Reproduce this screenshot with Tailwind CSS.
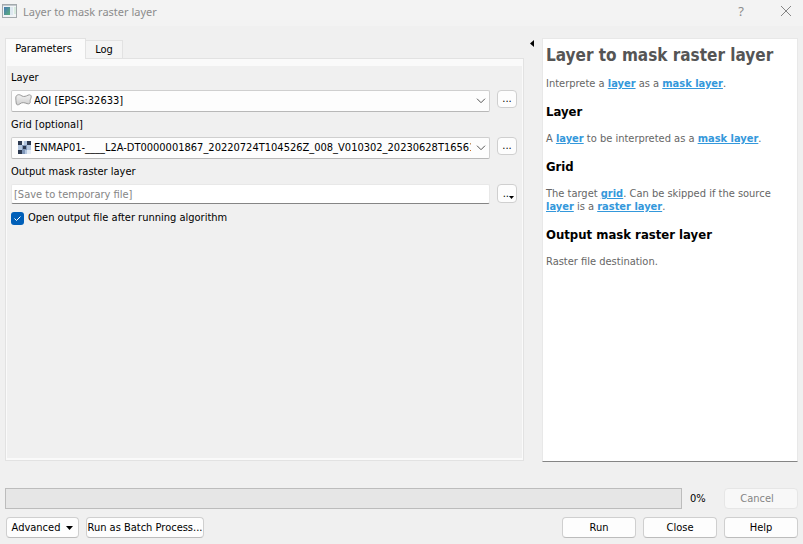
<!DOCTYPE html>
<html lang="en">
<head>
<meta charset="utf-8">
<title>Layer to mask raster layer</title>
<script src="https://cdn.jsdelivr.net/npm/@tailwindcss/browser@4"></script>
</head>
<body class="flex min-h-screen flex-col bg-[#f0f0f0] font-['DejaVu_Sans_Condensed','DejaVu_Sans',sans-serif] text-[11px] leading-4 text-black">
  <header class="flex h-[26px] items-center bg-[#f3f3f3] pl-[2px] pr-[11px] text-[#8c8c8c]">
    <svg class="mb-1 h-[14px] w-[15px]" viewBox="0 0 15 14" aria-hidden="true">
      <defs><linearGradient id="win" x1="0" y1="0" x2="1" y2="1"><stop offset="0" stop-color="#4678b4"/><stop offset="1" stop-color="#5cb07a"/></linearGradient></defs>
      <rect x=".5" y=".5" width="14" height="13" fill="#f1f4f6" stroke="#a3a9ad"/>
      <path d="M1 1.5h13" stroke="#c3c9cd"/>
      <rect x="2" y="3" width="6" height="8" fill="url(#win)"/>
      <rect x="8" y="3" width="3" height="8" fill="#dde8f0"/>
      <rect x="12" y="3" width="2" height="7" fill="#d7ebdf"/>
    </svg>
    <h1 class="ml-[6px] flex-1 pb-[2px] font-['Noto_Sans',sans-serif] text-[11px]">Layer to mask raster layer</h1>
    <button class="mr-[33px] w-3 pb-1 font-['Noto_Sans',sans-serif] text-[13px]" aria-label="What's this">?</button>
    <button class="pb-1" aria-label="Close window"><svg class="size-[12px]" viewBox="0 0 12 12" fill="none" stroke="#858585"><path d="M1 1l10 10M11 1L1 11"/></svg></button>
  </header>

  <main class="flex flex-1 px-[5px] pt-3">
    <section class="flex min-w-0 flex-1 flex-col pb-px">
      <div class="flex h-5 items-end" role="tablist">
        <button role="tab" aria-selected="true" class="relative z-10 -mb-px h-[21px] w-[81px] border border-b-0 border-[#e2e2e2] bg-[#fbfbfb] pr-1">Parameters</button>
        <button role="tab" aria-selected="false" class="h-[18px] w-[37px] border border-b-0 border-l-0 border-[#e2e2e2] bg-[#f4f4f4]">Log</button>
      </div>
      <div class="flex flex-1 border border-[#e2e2e2] bg-[#fafafa] px-px pt-[7px] pb-[2px]">
        <form class="min-w-0 flex-1 bg-[#f0f0f0] pl-1 pr-[5px] pt-1">
          <label for="layer" class="block">Layer</label>
          <div class="mt-1 flex items-start gap-[7px]">
            <div class="relative min-w-0 flex-1">
              <select id="layer" class="block h-[22px] w-full appearance-none rounded-[2px] border border-[#cfcfcf] border-b-[#b8b8b8] bg-[#fdfdfd] pl-[22px] pr-[18px]"><option>AOI [EPSG:32633]</option></select>
              <svg class="pointer-events-none absolute left-1 top-1 h-[12px] w-[17px]" viewBox="0 0 17 12" aria-hidden="true">
                <defs><linearGradient id="poly" x1="0" y1="0" x2="0" y2="1"><stop offset="0" stop-color="#f1f1f1"/><stop offset="1" stop-color="#cfcfcf"/></linearGradient></defs>
                <path d="M2.500 1C4 .2 5.500 1 7 2C9 3 11 2.200 13 1.200C15 .3 16.400 1 16.200 3C16 5 14.800 5.500 15.200 7.500C15.500 9.500 14 10.300 12 9.600C9.500 8.600 7 8 5 9.800C3 11.500 1.200 11 1.200 9C1.200 7 .6 6 .8 4C.9 2.500 1.200 1.500 2.500 1Z" fill="url(#poly)" stroke="#999"/></svg>
              <svg class="pointer-events-none absolute right-1 top-[8px] h-[6px] w-[10px]" viewBox="0 0 10 6" fill="none" stroke="#555" aria-hidden="true"><path d="M1 .7l4 4 4-4"/></svg>
            </div>
            <button type="button" aria-label="Choose layer" class="h-[18px] w-5 rounded-[4px] border border-[#cfcfcf] bg-[#fdfdfd]">...</button>
          </div>
          <label for="grid" class="mt-[5px] block">Grid [optional]</label>
          <div class="mt-1 flex items-start gap-[7px]">
            <div class="relative min-w-0 flex-1">
              <select id="grid" class="block h-[22px] w-full appearance-none rounded-[2px] border border-[#cfcfcf] border-b-[#b8b8b8] bg-[#fdfdfd] pl-[22px] pr-[18px]"><option>ENMAP01-____L2A-DT0000001867_20220724T104526Z_008_V010302_20230628T165614Z</option></select>
              <svg class="pointer-events-none absolute left-[7px] top-1 size-[13px]" viewBox="0 0 13 13" shape-rendering="crispEdges" aria-hidden="true">
                <path fill="#b4c7e0" d="M0 0h13v13H0z"/>
                <path fill="#2c3950" d="M0 0h4v4H0zM9 0h4v4H9zM5 5h3v3H5zM0 9h4v4H0z"/>
                <path fill="#7f96b8" d="M4 4h5v1H4zM4 5h1v4H4zM8 5h1v4H8zM5 8h3v1H5zM4 9h3v4H4z"/>
                <path fill="#e5edf6" d="M4 0h2v4H4zM9 9h4v4H9z"/>
              </svg>
              <svg class="pointer-events-none absolute right-1 top-[8px] h-[6px] w-[10px]" viewBox="0 0 10 6" fill="none" stroke="#555" aria-hidden="true"><path d="M1 .7l4 4 4-4"/></svg>
            </div>
            <button type="button" aria-label="Choose grid" class="h-[18px] w-5 rounded-[4px] border border-[#cfcfcf] bg-[#fdfdfd]">...</button>
          </div>
          <label for="output" class="mt-[5px] block">Output mask raster layer</label>
          <div class="mt-1 flex items-start gap-[7px]">
            <input id="output" type="text" placeholder="[Save to temporary file]" class="h-5 min-w-0 flex-1 rounded-[2px] border border-[#e8e8e8] border-b-[#858585] bg-white px-[2px] placeholder:text-[#858585]">
            <button type="button" aria-label="Output options" class="flex h-[19px] w-5 items-center justify-end rounded-[4px] border border-[#cfcfcf] bg-[#fdfdfd] pr-[2px]">..<svg class="mt-2 h-[3px] w-[5px]" viewBox="0 0 5 3"><path d="M0 0h5L2.500 3z"/></svg></button>
          </div>
          <label class="mt-[6px] flex items-center gap-1">
            <span class="relative flex size-[13px]">
              <input type="checkbox" checked class="size-[13px] appearance-none rounded-[3px] bg-[#005fb8]">
              <svg class="pointer-events-none absolute inset-0 size-[13px]" viewBox="0 0 13 13" fill="none" stroke="#fff" aria-hidden="true"><path d="M3.500 6.500l2 2 4-4"/></svg>
            </span>
            Open output file after running algorithm
          </label>
        </form>
      </div>
    </section>

    <div class="w-[18px] pl-[6px] pt-[2px]">
      <button aria-label="Collapse help" class="block"><svg class="h-[7px] w-1" viewBox="0 0 4 7"><path d="M4 0v7L0 3.500z"/></svg></button>
    </div>

    <aside class="w-64 border border-[#e8e8e8] border-b-[#858585] bg-white px-[3px] pt-[6px] text-[#666]">
      <h2 class="text-[17px] font-bold leading-5 text-[#555]">Layer to mask raster layer</h2>
      <p class="mt-3 leading-[13px]">Interprete a <a href="#" class="font-bold text-[#3498db] underline">layer</a> as a <a href="#" class="font-bold text-[#3498db] underline">mask layer</a>.</p>
      <h3 class="mt-[14px] text-[13px] font-bold text-black">Layer</h3>
      <p class="mt-3 leading-[13px]">A <a href="#" class="font-bold text-[#3498db] underline">layer</a> to be interpreted as a <a href="#" class="font-bold text-[#3498db] underline">mask layer</a>.</p>
      <h3 class="mt-[14px] text-[13px] font-bold text-black">Grid</h3>
      <p class="mt-3 leading-[13px]">The target <a href="#" class="font-bold text-[#3498db] underline">grid</a>. Can be skipped if the source <a href="#" class="font-bold text-[#3498db] underline">layer</a> is a <a href="#" class="font-bold text-[#3498db] underline">raster layer</a>.</p>
      <h3 class="mt-[14px] text-[13px] font-bold text-black">Output mask raster layer</h3>
      <p class="mt-3 leading-[13px]">Raster file destination.</p>
    </aside>
  </main>

  <footer class="px-[5px] pb-[6px] pt-[26px]">
    <div class="flex items-center">
      <div role="progressbar" aria-label="Progress" aria-valuenow="0" class="h-[21px] flex-1 border border-[#bcbcbc] bg-[#e6e6e6]"></div>
      <span class="w-[42px] pl-2">0%</span>
      <button disabled class="h-[21px] w-[74px] rounded-[4px] border border-[#e6e6e6] bg-[#f8f8f8] pr-2 text-[#858585]">Cancel</button>
    </div>
    <div class="mt-2 flex gap-[7px] pl-px">
      <button class="flex h-[21px] w-[73px] items-center justify-center gap-[6px] rounded-[4px] border border-[#cfcfcf] border-b-[#bcbcbc] bg-[#fdfdfd]">Advanced<svg class="h-1 w-[7px]" viewBox="0 0 7 4"><path d="M0 0h7L3.500 4z"/></svg></button>
      <button class="mr-auto h-[21px] w-[118px] whitespace-nowrap rounded-[4px] border border-[#cfcfcf] border-b-[#bcbcbc] bg-[#fdfdfd]">Run as Batch Process...</button>
      <button class="h-[21px] w-[74px] rounded-[4px] border border-[#cfcfcf] border-b-[#bcbcbc] bg-[#fdfdfd]">Run</button>
      <button class="h-[21px] w-[74px] rounded-[4px] border border-[#cfcfcf] border-b-[#bcbcbc] bg-[#fdfdfd]">Close</button>
      <button class="h-[21px] w-[74px] rounded-[4px] border border-[#cfcfcf] border-b-[#bcbcbc] bg-[#fdfdfd]">Help</button>
    </div>
  </footer>
</body>
</html>
